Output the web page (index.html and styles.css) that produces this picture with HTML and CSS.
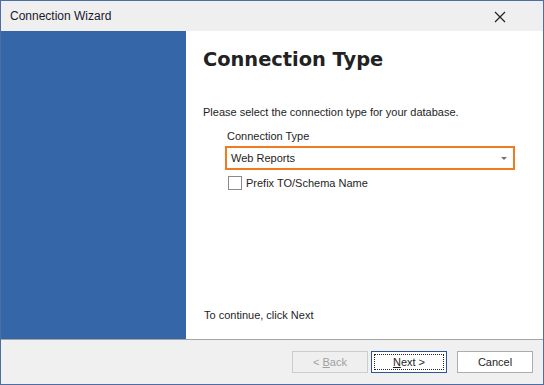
FILE: index.html
```html
<!DOCTYPE html>
<html lang="en">
<head>
    <meta charset="UTF-8">
    <title>Connection Wizard</title>
    <link rel="stylesheet" href="styles.css">
</head>
<body>
    <div class="window">
        <div class="titlebar">
            <span class="title">Connection Wizard</span>
            <svg class="close-icon" width="12" height="12" viewBox="0 0 12 12">
                <path d="M1 1 L11 11 M11 1 L1 11" stroke="#222" stroke-width="1.2" fill="none"/>
            </svg>
        </div>

        <div class="main">
            <div class="sidebar"></div>
            <div class="content">
                <h1 class="page-title">Connection Type</h1>
                <p class="intro">Please select the connection type for your database.</p>

                <div class="field">
                    <label class="field-label">Connection Type</label>
                    <div class="select">
                        <span class="select-value">Web Reports</span>
                        <span class="select-arrow"></span>
                    </div>
                    <div class="check-row">
                        <span class="checkbox"></span>
                        <span class="check-label">Prefix TO/Schema Name</span>
                    </div>
                </div>

                <p class="hint">To continue, click Next</p>
            </div>
        </div>

        <div class="footer">
            <button class="btn btn-disabled"><span>&lt; <u>B</u>ack</span></button>
            <button class="btn btn-default"><span class="focus"><span><u>N</u>ext &gt;</span></span></button>
            <button class="btn btn-cancel"><span>Cancel</span></button>
        </div>
    </div>
</body>
</html>
```

FILE: styles.css
```css
* {
    margin: 0;
    padding: 0;
    box-sizing: border-box;
}

body {
    font-family: 'Liberation Sans', Arial, sans-serif;
    font-size: 11px;
    color: #1e1e1e;
    background: #fff;
}

.window {
    width: 544px;
    height: 385px;
    border: 1px solid #4a6ea5;
    display: flex;
    flex-direction: column;
}

.titlebar {
    height: 30px;
    background-color: #efefef;
    display: flex;
    align-items: center;
    padding-left: 9px;
    padding-right: 37px;
}

.title {
    flex: 1;
    font-size: 12px;
    color: #1a1a2e;
}

.close-icon {
    display: block;
    margin-top: 1px;
}

.main {
    flex: 1;
    display: flex;
    border-bottom: 1px solid #a5a5a5;
}

.sidebar {
    width: 185px;
    background-color: #3566a7;
}

.content {
    flex: 1;
    background: #fff;
    display: flex;
    flex-direction: column;
    padding: 17px 0 17px 17px;
}

.page-title {
    font-family: 'DejaVu Sans', Verdana, sans-serif;
    font-size: 19.4px;
    line-height: 24px;
    font-weight: bold;
    color: #222;
}

.intro {
    margin-top: 33px;
    line-height: 14px;
}

.field {
    margin-top: 10px;
    padding-left: 22px;
}

.field-label {
    display: block;
    line-height: 14px;
    padding-left: 2px;
}

.select {
    margin-top: 3px;
    width: 290px;
    height: 24px;
    border: 2px solid #f47a20;
    display: flex;
    align-items: center;
    padding: 0 6px 0 4px;
}

.select-value {
    flex: 1;
}

.select-arrow {
    width: 0;
    height: 0;
    border-left: 3px solid transparent;
    border-right: 3px solid transparent;
    border-top: 3px solid #707070;
}

.check-row {
    margin-top: 6px;
    display: flex;
    align-items: center;
    padding-left: 3px;
}

.checkbox {
    width: 14px;
    height: 14px;
    border: 1px solid #8a8a8a;
    background: #fff;
    margin-right: 4px;
}

.hint {
    margin-top: auto;
    line-height: 14px;
    padding-left: 1px;
}

.footer {
    height: 44px;
    background-color: #f0f0f0;
    display: flex;
    justify-content: flex-end;
    align-items: flex-start;
    padding: 11px 10px 0 0;
}

.btn {
    width: 76px;
    height: 22px;
    font-family: 'Liberation Sans', Arial, sans-serif;
    font-size: 11px;
    background: #fff;
    border: 1px solid #adadad;
    color: #1e1e1e;
    display: flex;
    align-items: center;
    justify-content: center;
}

.btn-disabled {
    background: #efefef;
    border-color: #cccccc;
    color: #a0a0a0;
    margin-right: 3px;
}

.btn-default {
    border-color: #2d5393;
    padding: 2px;
    margin-right: 10px;
}

.focus {
    width: 100%;
    height: 100%;
    border: 1px dotted #222;
    display: flex;
    align-items: center;
    justify-content: center;
}

.btn-cancel {
    border-color: #adadad;
}
```
